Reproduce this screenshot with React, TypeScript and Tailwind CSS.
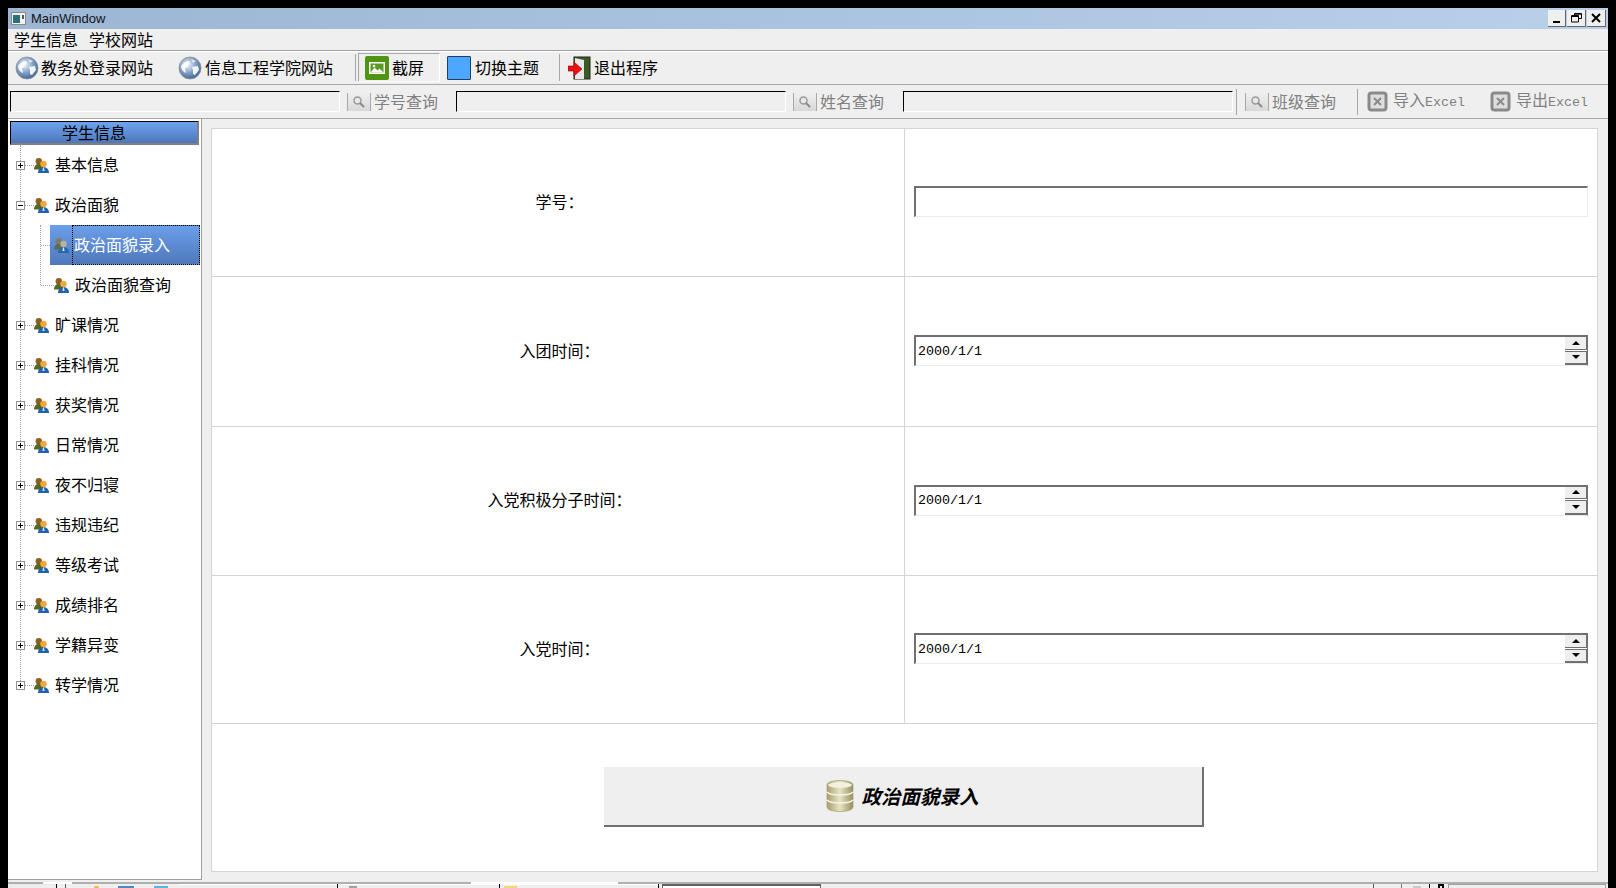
import React from "react";

const cjk = "font-['Noto_Sans_CJK_SC',sans-serif]";
const mono = "font-['Liberation_Mono','Noto_Sans_CJK_SC',monospace]";

const Globe = () => (
  <svg width="24" height="24" viewBox="0 0 24 24" className="shrink-0">
    <defs>
      <radialGradient id="globeFill" cx="40%" cy="35%" r="70%">
        <stop offset="0%" stopColor="#f2f6fb" />
        <stop offset="55%" stopColor="#7f9ec4" />
        <stop offset="100%" stopColor="#3c5f8e" />
      </radialGradient>
    </defs>
    <circle cx="12" cy="12" r="11" fill="url(#globeFill)" stroke="#8a8f96" strokeWidth="0.8" />
    <path d="M3 10c2-3 5-5 8-5l1 2-3 2 1 2-3 1 1 5c-3-1-5-4-5-7z" fill="#fff" opacity="0.9" />
    <path d="M14 11l6-1 1 4-4 5-2-1v-4z" fill="#fff" opacity="0.9" />
    <path d="M13 3l5 2-3 2z" fill="#fff" opacity="0.7" />
  </svg>
);

const People = ({ dim }: { dim?: boolean }) => (
  <svg width="15" height="15" viewBox="0 0 15 15" className="shrink-0">
    <circle cx="4.800" cy="3.300" r="3.200" fill={dim ? "#7d7a68" : "#8f5f1e"} />
    <path d="M0 11.500c0-3.500 2-5.500 4.800-5.500s4.800 2 4.800 5.500z" fill={dim ? "#5b6b55" : "#56681f"} />
    <circle cx="9.500" cy="6" r="3.200" fill={dim ? "#b8b2a0" : "#f0a83a"} />
    <path d="M4 15c0-3.800 2.300-5.800 5.500-5.800s5.500 2 5.500 5.800z" fill={dim ? "#2a66a8" : "#1f62ad"} />
    <path d="M9 9.500h1l.5 3.500h-2z" fill="#e8eef6" />
  </svg>
);

const SearchBtn = () => (
  <div className="w-[24px] h-[18px] shrink-0 border-x border-[#a8a8a8] bg-gradient-to-b from-[#efefef] to-[#d8d8d8] flex items-center justify-center">
    <svg width="14" height="14" viewBox="0 0 14 14">
      <circle cx="5.500" cy="5.500" r="3.500" fill="#e8e8e8" stroke="#9a9a9a" strokeWidth="1.500" />
      <path d="M8 8l4 4" stroke="#8c8c8c" strokeWidth="2.200" />
    </svg>
  </div>
);

const ExcelIcon = () => (
  <svg width="21" height="21" viewBox="0 0 21 21" className="shrink-0">
    <rect x="0.500" y="0.500" width="20" height="20" rx="4" fill="#8a8a8a" />
    <rect x="3.500" y="3.500" width="14" height="14" rx="1" fill="#dedede" />
    <path d="M7 7l7 7M14 7l-7 7" stroke="#8a8a8a" strokeWidth="2" />
  </svg>
);

const SunkenInput = ({ w }: { w: string }) => (
  <div className={`${w} h-[21px] shrink-0 border-t border-l border-t-black border-l-black border-r border-b border-r-white border-b-white bg-[#efefef]`} />
);

const Expander = ({ open }: { open?: boolean }) => (
  <div className="relative w-[9px] h-[9px] shrink-0 border border-[#919191] bg-white flex items-center justify-center">
    <div className="w-[5px] h-px bg-black" />
    {!open && <div className="absolute w-px h-[5px] bg-black" />}
  </div>
);

const TreeTop = ({ label, open }: { label: string; open?: boolean }) => (
  <div className="h-10 flex items-center pl-[8px]">
    <Expander open={open} />
    <div className="w-[9px] border-t border-dotted border-[#a0a0a0]" />
    <People />
    <span className={`ml-[6px] pb-[2px] text-[16px] leading-none text-black ${cjk}`}>{label}</span>
  </div>
);

const DateField = () => (
  <div className="h-[31px] flex items-center border-t-2 border-l-2 border-t-[#707070] border-l-[#707070] border-b border-r border-b-[#ececec] border-r-[#707070] bg-white relative">
    <span className={`pl-[2px] pt-[1px] text-[13.33px] text-black ${mono}`}>2000/1/1</span>
    <div className="ml-auto flex flex-col w-[22px] h-[28px] gap-px">
      <div className="flex-1 bg-[#efefef] border-b border-r border-b-[#707070] border-r-[#707070] flex items-center justify-center">
        <div className="w-0 h-0 border-x-[4px] border-x-transparent border-b-[4px] border-b-black" />
      </div>
      <div className="flex-1 bg-[#efefef] border-b-2 border-r border-b-[#707070] border-r-[#707070] border-t border-t-[#707070] flex items-center justify-center">
        <div className="w-0 h-0 border-x-[4px] border-x-transparent border-t-[4px] border-t-black" />
      </div>
    </div>
  </div>
);

const rows = [
  { label: "学号：", h: "h-[148px]", date: false },
  { label: "入团时间：", h: "h-[150px]", date: true },
  { label: "入党积极分子时间：", h: "h-[149px]", date: true },
  { label: "入党时间：", h: "h-[148px]", date: true },
];

const topItems = ["基本信息", "政治面貌"];
const restItems = ["旷课情况", "挂科情况", "获奖情况", "日常情况", "夜不归寝", "违规违纪", "等级考试", "成绩排名", "学籍异变", "转学情况"];

export default function App() {
  return (
    <div className="w-[1616px] h-[888px] bg-black pt-2 pl-2 overflow-hidden">
      <div className="w-[1600px] h-[880px] bg-[#efefef] flex flex-col">
        {/* title bar */}
        <div className="h-[21px] shrink-0 flex items-center bg-gradient-to-r from-[#9cb6d3] to-[#b9d0e9] pl-[3px] pr-[2px]">
          <svg width="15" height="13" viewBox="0 0 15 13" className="shrink-0">
            <rect x="0.500" y="0.500" width="14" height="12" fill="#f2f2f2" stroke="#8a8a8a" />
            <rect x="2" y="3" width="7" height="8" fill="#2f6f78" />
            <rect x="11" y="3" width="2" height="4" fill="#555" />
          </svg>
          <span className="ml-[5px] text-[13px] leading-none text-[#10131a] font-['Liberation_Sans',sans-serif]">MainWindow</span>
          <div className="ml-auto flex gap-px">
            <div className="w-[18px] h-[17px] bg-[#efefef] border-r border-b border-[#666] flex items-end justify-center pb-[3px]">
              <div className="w-[7px] h-[2px] bg-black" />
            </div>
            <div className="w-[19px] h-[17px] bg-[#efefef] border-r border-b border-[#666] flex items-center justify-center">
              <svg width="11" height="10" viewBox="0 0 11 10">
                <path d="M3.500 2.500V.5h7v5H8M.5 2.500h7v6.500h-7zM.5 3.500h7M3.500 1.200h7" stroke="#000" fill="none" />
              </svg>
            </div>
            <div className="w-[19px] h-[17px] bg-[#efefef] border-r border-b border-[#666] flex items-center justify-center">
              <svg width="10" height="10" viewBox="0 0 10 10">
                <path d="M1 1l8 8M9 1l-8 8" stroke="#000" strokeWidth="2" />
              </svg>
            </div>
          </div>
        </div>

        {/* menu */}
        <div className={`h-[21px] shrink-0 flex items-center pl-[6px] gap-[11px] text-[16px] leading-none text-black ${cjk}`}>
          <span className="pb-[1px]">学生信息</span>
          <span className="pb-[1px]">学校网站</span>
        </div>

        {/* main toolbar */}
        <div className={`h-[35px] shrink-0 flex items-center border-t border-t-[#a0a0a0] border-b border-b-[#a8a8a8] shadow-[inset_0_1px_0_#ffffff] text-[16px] leading-none text-black ${cjk}`}>
          <div className="ml-[7px]"><Globe /></div>
          <span className="ml-[2px] pb-[2px] whitespace-nowrap">教务处登录网站</span>
          <div className="ml-[25px]"><Globe /></div>
          <span className="ml-[3px] pb-[2px] whitespace-nowrap">信息工程学院网站</span>
          <div className="ml-[22px] w-px h-[27px] bg-[#a8a8a8]" />
          <div className="ml-[2px] w-[82px] h-[29px] flex items-center pl-[6px] border border-t-[#a8a8a8] border-l-[#a8a8a8] border-r-white border-b-white">
            <svg width="24" height="24" viewBox="0 0 24 24" className="shrink-0">
              <rect width="24" height="24" rx="2" fill="#4f9412" />
              <rect x="4" y="6" width="16" height="12" fill="#fff" />
              <rect x="5.500" y="7.500" width="13" height="9" fill="#5a9a20" />
              <path d="M5.500 16.500l4-5 3 3 2-2 4 4z" fill="#fff" />
              <circle cx="9" cy="10" r="1.300" fill="#fff" />
            </svg>
            <span className="ml-[3px] pb-[2px] whitespace-nowrap">截屏</span>
          </div>
          <div className="ml-[7px] w-[24px] h-[24px] bg-[#4da6ff] border border-[#1f3f60] rounded-[1px]" />
          <span className="ml-[4px] pb-[2px] whitespace-nowrap">切换主题</span>
          <div className="ml-[20px] w-px h-[27px] bg-[#a8a8a8]" />
          <svg width="23" height="24" viewBox="0 0 23 24" className="ml-[8px] shrink-0">
            <rect x="6" y="1" width="16" height="22" fill="#3d5a24" stroke="#222" />
            <path d="M7 2l9 2v19H7z" fill="#e8e8e8" />
            <path d="M0 10h6V6l8 7-8 7v-5H0z" fill="#ee1111" stroke="#900" strokeWidth="0.600" />
          </svg>
          <span className="ml-[3px] pb-[2px] whitespace-nowrap">退出程序</span>
        </div>

        {/* search toolbar */}
        <div className={`h-[34px] shrink-0 flex items-center border-b border-b-[#a8a8a8] text-[16px] leading-none text-[#808080] ${cjk}`}>
          <div className="ml-[2px]"><SunkenInput w="w-[330px]" /></div>
          <div className="ml-[7px]"><SearchBtn /></div>
          <span className="ml-[3px] pb-[2px] whitespace-nowrap">学号查询</span>
          <div className="ml-[18px]"><SunkenInput w="w-[330px]" /></div>
          <div className="ml-[7px]"><SearchBtn /></div>
          <span className="ml-[3px] pb-[2px] whitespace-nowrap">姓名查询</span>
          <div className="ml-[19px]"><SunkenInput w="w-[330px]" /></div>
          <div className="ml-[3px] w-px h-[26px] bg-[#a8a8a8]" />
          <div className="ml-[8px]"><SearchBtn /></div>
          <span className="ml-[3px] pb-[2px] whitespace-nowrap">班级查询</span>
          <div className="ml-[21px] w-px h-[26px] bg-[#a8a8a8]" />
          <div className="ml-[9px]"><ExcelIcon /></div>
          <span className="ml-[5px] pb-[2px] whitespace-nowrap">导入<span className={`text-[13.33px] ${mono}`}>Excel</span></span>
          <div className="ml-[25px]"><ExcelIcon /></div>
          <span className="ml-[5px] pb-[2px] whitespace-nowrap">导出<span className={`text-[13.33px] ${mono}`}>Excel</span></span>
        </div>

        {/* body */}
        <div className="flex-1 min-h-0 flex">
          {/* sidebar */}
          <div className="w-[194px] shrink-0 bg-white border-r border-b border-[#a0a0a0] mb-[2px] pt-[2px] relative">
            <div className={`ml-[2px] w-[189px] h-[24px] flex items-center justify-start pl-[51px] border-t border-l border-t-black border-l-black border-r-2 border-b-2 border-r-[#808080] border-b-[#808080] bg-gradient-to-b from-[#6ea3f0] to-[#4f77b8] text-[16px] leading-none text-black ${cjk}`}>
              <span className="pb-[2px]">学生信息</span>
            </div>
            <div className="absolute left-[12px] top-[26px] h-[540px] border-l border-dotted border-[#a0a0a0]" />
            <div className="relative">
              {topItems.map((t, i) => (
                <TreeTop key={t} label={t} open={i === 1} />
              ))}
              {/* child lines */}
              <div className="absolute left-[32px] top-[80px] h-[60px] border-l border-dotted border-[#a0a0a0]" />
              <div className="h-10 flex items-center">
                <div className="ml-[33px] w-[9px] border-t border-dotted border-[#a0a0a0]" />
                <div className="h-10 w-[22px] bg-gradient-to-b from-[#6a9fea] to-[#4f78ba] flex items-center justify-center"><People dim /></div>
                <div className={`h-10 w-[128px] flex items-center pl-[1px] border border-dotted border-black bg-gradient-to-b from-[#6a9fea] to-[#4f78ba] text-[16px] leading-none text-white ${cjk}`}>
                  <span className="pb-[2px]">政治面貌录入</span>
                </div>
              </div>
              <div className="h-10 flex items-center">
                <div className="ml-[33px] w-[13px] border-t border-dotted border-[#a0a0a0]" />
                <People />
                <span className={`ml-[6px] pb-[2px] text-[16px] leading-none text-black ${cjk}`}>政治面貌查询</span>
              </div>
              {restItems.map((t) => (
                <TreeTop key={t} label={t} />
              ))}
            </div>
          </div>

          {/* form */}
          <div className="flex-1 min-w-0 pl-[9px] pr-[10px] pt-[9px] pb-[10px]">
            <div className="h-full bg-white border-t border-b border-[#d4d4d4] border-x flex flex-col">
              {rows.map((r) => (
                <div key={r.label} className={`${r.h} shrink-0 flex border-b border-[#d4d4d4]`}>
                  <div className={`w-[693px] shrink-0 border-r border-[#d4d4d4] flex items-center justify-center pl-[3px] text-[16px] leading-none text-black ${cjk}`}>
                    <span className="pb-[4px]">{r.label}</span>
                  </div>
                  <div className="flex-1 min-w-0 pl-[9px] pr-[9px] pb-[2px] flex flex-col justify-center">
                    {r.date ? (
                      <DateField />
                    ) : (
                      <div className="h-[31px] border-t-2 border-l-2 border-t-[#707070] border-l-[#707070] border-b border-r border-b-[#ececec] border-r-[#ececec] bg-white" />
                    )}
                  </div>
                </div>
              ))}
              <div className="flex-1 flex items-center justify-center pr-[2px] pb-[2px]">
                <div className="w-[600px] h-[60px] flex items-center justify-center bg-[#efefef] border-r-2 border-b-2 border-r-[#707070] border-b-[#707070]">
                  <svg width="28" height="32" viewBox="0 0 28 32" className="shrink-0">
                    <defs>
                      <linearGradient id="dbFill" x1="0" x2="1" y1="0" y2="0">
                        <stop offset="0%" stopColor="#a8a070" />
                        <stop offset="50%" stopColor="#e8e4c4" />
                        <stop offset="100%" stopColor="#97905e" />
                      </linearGradient>
                    </defs>
                    <path d="M1 5c0-6 26-6 26 0v22c0 6-26 6-26 0z" fill="url(#dbFill)" stroke="#9a9468" strokeWidth="0.600" />
                    <ellipse cx="14" cy="5" rx="12" ry="3" fill="#f2f0de" />
                    <path d="M1 12c4 4 22 4 26 0M1 20c4 4 22 4 26 0" stroke="#f6f4e6" strokeWidth="1.500" fill="none" />
                  </svg>
                  <span className={`ml-[7px] text-[19.5px] leading-none font-bold italic text-black ${cjk}`}>政治面貌录入</span>
                </div>
              </div>
            </div>
          </div>
        </div>

        {/* cut off status strip */}
        <div className="h-[2px] shrink-0 flex">
          <div className="w-[35px] bg-[#b0b0b0]" />
          <div className="w-[29px] bg-white" />
          <div className="w-[399px] bg-[#b0b0b0]" />
          <div className="w-[147px] bg-white" />
          <div className="flex-1 bg-[#b0b0b0]" />
        </div>
        <div className="h-[4px] shrink-0 flex bg-[#efefef] overflow-hidden">
          <div className="ml-[2px] w-[46px] border-t border-x border-[#e8e8e8]" />
          <div className="w-px bg-black" />
          <div className="ml-[8px] w-px bg-[#555]" />
          <div className="ml-[28px] w-[5px] h-[2px] self-end bg-[#f0b840] rounded-t-full" />
          <div className="ml-[19px] w-[16px] h-[2px] self-end bg-[#4f87c0]" />
          <div className="ml-[20px] w-[14px] h-[2px] self-end bg-[#5ab4e8]" />
          <div className="ml-[11px] w-[158px] border-t border-white" />
          <div className="w-px bg-black" />
          <div className="ml-[3px] w-[158px] border-t border-white pl-[8px] flex items-end"><div className="w-[8px] h-[2px] bg-[#a0a0a0]" /></div>
          <div className="w-px bg-black" />
          <div className="ml-[3px] w-[155px] border-t border-white pl-[1px] flex items-end"><div className="w-[13px] h-[2px] bg-[#f0d878]" /></div>
          <div className="w-px bg-black" />
          <div className="ml-[3px] w-[159px] bg-white border-t-2 border-x border-[#606060]" />
          <div className="ml-[552px] w-px bg-[#555]" />
          <div className="ml-[27px] w-px bg-[#777]" />
          <div className="ml-[11px] w-[8px] h-[2px] self-end bg-[#c8c8c8]" />
          <div className="ml-[8px] w-px bg-black" />
          <div className="ml-[8px] w-[6px] border-2 border-b-0 border-black" />
          <div className="ml-[4px] flex-1 mr-[2px] border-t border-l border-r border-[#a0a0a0]" />
        </div>
      </div>
    </div>
  );
}
